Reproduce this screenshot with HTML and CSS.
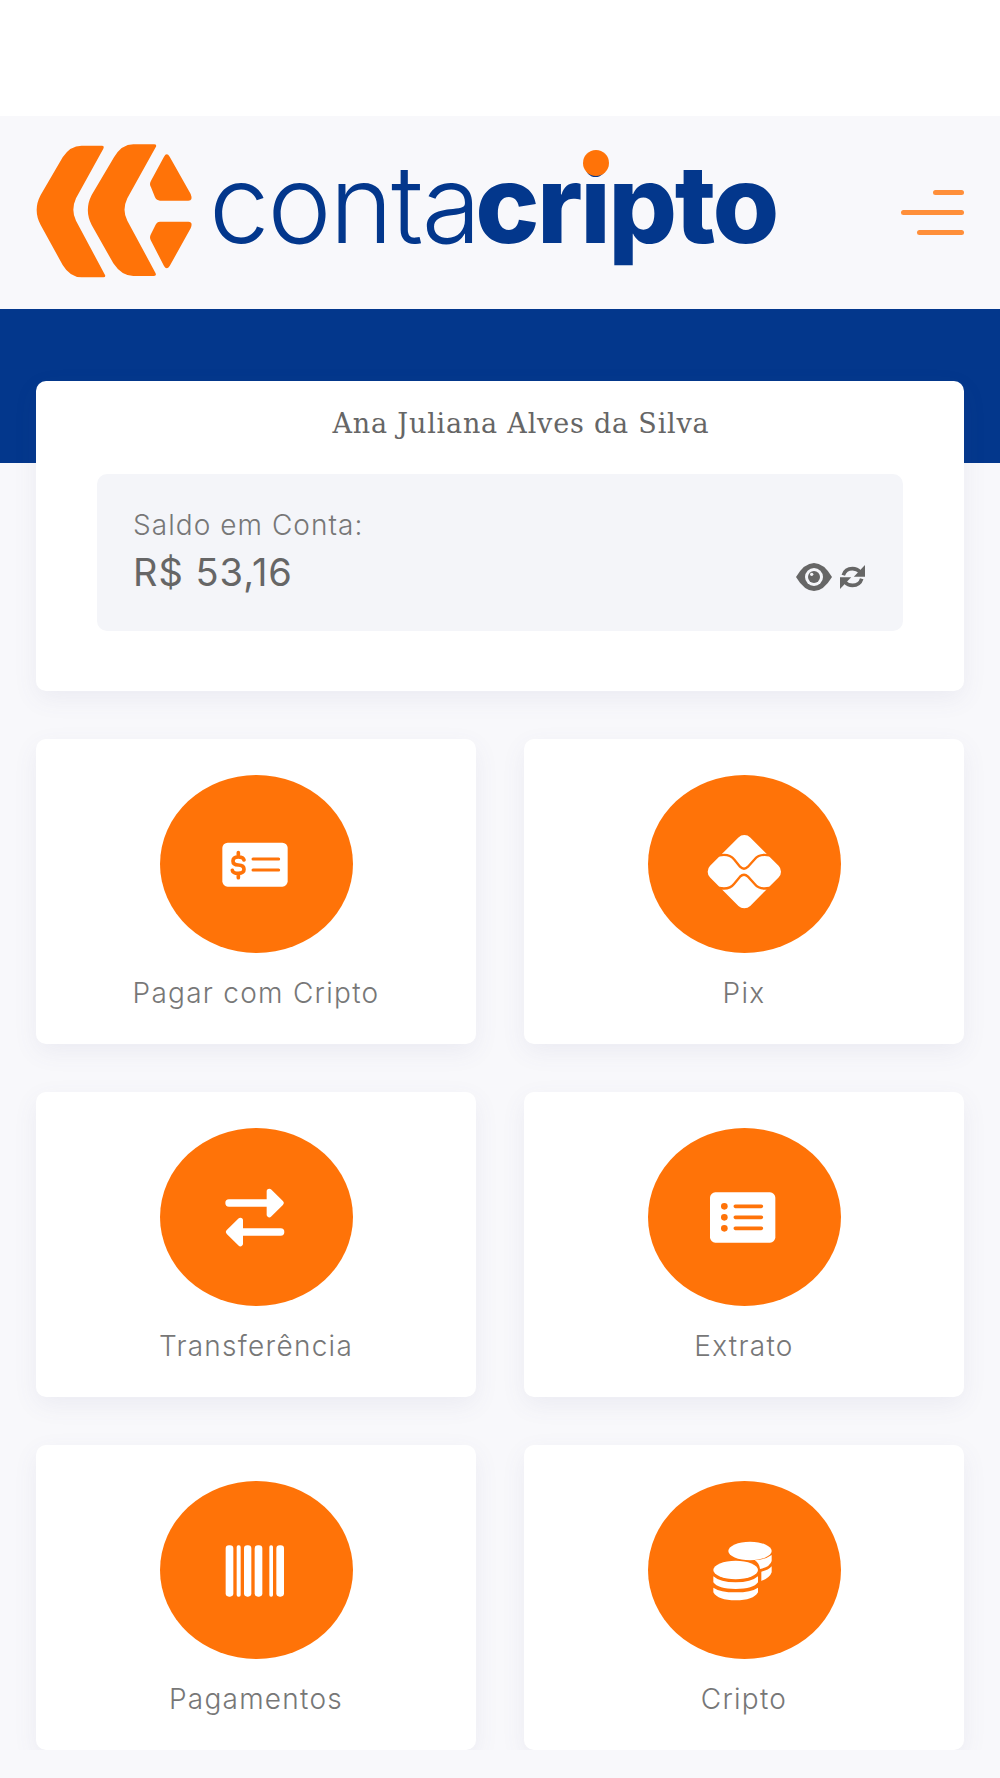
FILE: index.html
```html
<!DOCTYPE html>
<html lang="pt-BR">
<head>
  <meta charset="UTF-8" />
  <meta name="viewport" content="width=device-width, initial-scale=1.0"/>
  <title>Conta Cripto</title>
  <link rel="stylesheet" href="styles.css">
</head>
<body>
  <div class="top-gap"></div>

  <!-- Logo and menu -->
  <div class="navbar">
    <div class="logo">
      <svg class="logo-mark" viewBox="0 0 570 480" aria-hidden="true">
        <path d="M245 47 Q254 47 250 56 L168 205 Q152 240 168 272 L255 435 Q258 442 250 442 L185 442 Q150 442 128 405 L62 285 Q38 240 62 195 L128 82 Q150 47 185 47 Z"/>
        <path d="M402 43 Q412 43 407 52 L322 205 Q305 240 322 272 L406 428 Q411 438 402 438 L340 438 Q305 438 280 400 L215 285 Q192 240 215 195 L282 82 Q305 43 340 43 Z"/>
        <path d="M432 80 Q440 66 449 80 L512 192 Q520 212 505 212 L420 212 Q410 212 405 202 L393 172 Q387 162 393 152 Z"/>
        <path d="M420 275 L505 275 Q520 275 512 295 L449 408 Q440 422 432 408 L393 332 Q387 322 393 312 L405 288 Q410 275 420 275 Z"/>
      </svg>
      <div class="logo-text"><span class="logo-light">conta</span><span class="logo-bold">cr<span class="logo-i">i</span>pto</span></div>
    </div>
    <div class="menu-btn">
      <span class="menu-line line-short"></span>
      <span class="menu-line line-long"></span>
      <span class="menu-line line-mid"></span>
    </div>
  </div>

  <div class="hero"></div>

  <div class="content">
    <!-- Account balance -->
    <div class="account-card">
      <h2 class="account-name">Ana Juliana Alves da Silva</h2>
      <div class="balance-box">
        <div class="balance-text">
          <div class="balance-label">Saldo em Conta:</div>
          <div class="balance-value">R$ 53,16</div>
        </div>
        <div class="balance-tools">
          <svg class="tool-eye" viewBox="50 68 108 84" aria-hidden="true">
            <path class="tool-fill" d="M50 110 Q75 68 104 68 Q133 68 158 110 Q133 152 104 152 Q75 152 50 110 Z"/>
            <circle class="tool-hole" cx="104" cy="110" r="27"/>
            <circle class="tool-fill" cx="104" cy="110" r="18"/>
            <circle class="tool-hole" cx="97" cy="102" r="5"/>
          </svg>
          <svg class="tool-sync" viewBox="182 75 76 73" aria-hidden="true">
            <path class="tool-line" d="M192 106 Q198 86 220 86 Q234 86 243 96"/>
            <path class="tool-fill" d="M258 75 V111 H224 Z"/>
            <path class="tool-line" d="M248 117 Q242 137 220 137 Q206 137 197 127"/>
            <path class="tool-fill" d="M182 148 V112 H216 Z"/>
          </svg>
        </div>
      </div>
    </div>

    <!-- Shortcuts -->
    <div class="action-grid">
      <div class="action-card">
        <div class="action-circle">
          <svg class="action-icon" viewBox="108 72 240 240" aria-hidden="true">
            <rect class="ic-white" x="127" y="128" width="196" height="132" rx="16"/>
            <path class="ic-cut heavy" d="M192 180 Q190 171 175 171 Q159 171 159 183 Q159 195 175 195 Q192 195 192 208 Q192 220 175 220 Q159 220 157 211 M175 158 V171 M175 220 V233"/>
            <path class="ic-cut" d="M219 177 H296 M219 210 H296"/>
          </svg>
        </div>
        <div class="action-label">Pagar com Cripto</div>
      </div>
      <div class="action-card">
        <div class="action-circle">
          <svg class="action-icon" viewBox="102 72 240 240" aria-hidden="true">
            <polygon class="ic-round big" points="223,130 308,215 223,300 138,215"/>
            <path class="ic-cut thin" d="M148 166 Q178 160 192 178 L210 200 Q222 212 234 200 L254 178 Q268 160 298 166"/>
            <path class="ic-cut thin" d="M148 264 Q178 270 192 252 L210 230 Q222 218 234 230 L254 252 Q268 270 298 264"/>
          </svg>
        </div>
        <div class="action-label">Pix</div>
      </div>
      <div class="action-card">
        <div class="action-circle">
          <svg class="action-icon" viewBox="108 81 240 240" aria-hidden="true">
            <path class="ic-bar" d="M147 159 H270 M302 246 H180"/>
            <polygon class="ic-round small" points="268,124 303,159 268,194"/>
            <polygon class="ic-round small" points="181,211 146,246 181,281"/>
          </svg>
        </div>
        <div class="action-label">Transferência</div>
      </div>
      <div class="action-card">
        <div class="action-circle">
          <svg class="action-icon" viewBox="102 81 240 240" aria-hidden="true">
            <rect class="ic-white" x="120" y="127" width="196" height="151" rx="16"/>
            <circle class="ic-dot" cx="163" cy="169" r="10"/>
            <circle class="ic-dot" cx="163" cy="202" r="10"/>
            <circle class="ic-dot" cx="163" cy="235" r="10"/>
            <path class="ic-cut wide" d="M196 169 H274 M196 202 H274 M196 235 H274"/>
          </svg>
        </div>
        <div class="action-label">Extrato</div>
      </div>
      <div class="action-card">
        <div class="action-circle">
          <svg class="action-icon" viewBox="108 87 240 240" aria-hidden="true">
            <rect class="ic-white" x="137" y="133" width="23" height="154" rx="10"/>
            <rect class="ic-white" x="170" y="133" width="12" height="154" rx="5"/>
            <rect class="ic-white" x="192" y="133" width="22" height="154" rx="10"/>
            <rect class="ic-white" x="224" y="133" width="23" height="154" rx="10"/>
            <rect class="ic-white" x="268" y="133" width="11" height="154" rx="5"/>
            <rect class="ic-white" x="289" y="133" width="23" height="154" rx="10"/>
          </svg>
        </div>
        <div class="action-label">Pagamentos</div>
      </div>
      <div class="action-card">
        <div class="action-circle">
          <svg class="action-icon" viewBox="102 87 240 240" aria-hidden="true">
            <ellipse class="ic-white" cx="240" cy="150" rx="65" ry="28"/>
            <path class="ic-white" d="M254 178 Q285 176 305 162 V180 Q300 198 270 204 Q268 186 254 178 Z"/>
            <path class="ic-white" d="M274 212 Q295 208 305 196 V214 Q300 230 274 240 Z"/>
            <ellipse class="ic-white" cx="197" cy="207" rx="67" ry="28"/>
            <path class="ic-white" d="M130 226 Q150 244 197 244 Q244 244 264 226 V244 Q250 264 197 264 Q144 264 130 244 Z"/>
            <path class="ic-white" d="M130 260 Q150 274 197 274 Q244 274 264 260 V274 Q250 298 197 298 Q144 298 130 274 Z"/>
          </svg>
        </div>
        <div class="action-label">Cripto</div>
      </div>
    </div>
  </div>
</body>
</html>
```

FILE: styles.css
```css
* {
  box-sizing: border-box;
}

body {
  margin: 0;
  background-color: #f8f8fb;
  font-family: Inter, "Open Sans", sans-serif;
  color: #666;
}

.top-gap {
  height: 116px;
  background-color: #fff;
}

/* header */
.navbar {
  height: 193px;
  display: flex;
  align-items: center;
  justify-content: space-between;
  padding: 0 36px 0 20px;
}
.logo {
  display: flex;
  align-items: center;
}
.logo-mark {
  width: 190px;
  height: 160px;
  fill: #ff7308;
  margin-top: -6px;
}
.logo-text {
  font-size: 108px;
  line-height: 1;
  color: #03378c;
  display: flex;
  margin-top: -17px;
}
.logo-light {
  font-weight: 300;
  letter-spacing: -2px;
  margin-left: -1px;
}
.logo-bold {
  font-weight: 800;
  letter-spacing: -2.5px;
  margin-left: -4px;
}
.logo-i {
  position: relative;
}
.logo-i::after {
  content: "";
  position: absolute;
  left: 50%;
  top: 12px;
  width: 26px;
  height: 26px;
  margin-left: -11px;
  border-radius: 50%;
  background-color: #ff7308;
}

.menu-btn {
  width: 63px;
  display: flex;
  flex-direction: column;
  align-items: flex-end;
  gap: 15px;
}
.menu-line {
  height: 5px;
  border-radius: 3px;
  background-color: #ff8f3a;
}
.line-short { width: 31px; }
.line-long { width: 63px; }
.line-mid { width: 47px; }

.hero {
  height: 154px;
  background-color: #03378c;
}

.content {
  margin-top: -82px;
  padding: 0 36px;
  position: relative;
}

/* balance */
.account-card {
  height: 310px;
  background: #fff;
  border-radius: 10px;
  padding: 24px 61px 0;
  box-shadow: 0 8px 24px rgba(90, 90, 140, 0.08);
  margin-bottom: 48px;
}
.account-name {
  margin: 0 0 31px;
  padding-left: 42px;
  font-family: "DejaVu Serif", "Liberation Serif", serif;
  font-size: 27px;
  letter-spacing: 0.8px;
  line-height: 38px;
  font-weight: 400;
  text-align: center;
  color: #666;
}
.balance-box {
  height: 157px;
  background-color: #f4f5f9;
  border-radius: 10px;
  padding: 32px 38px 0 36px;
  display: flex;
  justify-content: space-between;
}
.balance-label {
  font-size: 28px;
  font-weight: 300;
  letter-spacing: 1.05px;
  line-height: 38px;
  color: #777;
}
.balance-value {
  font-size: 38px;
  font-weight: 400;
  letter-spacing: 1px;
  line-height: 50px;
  margin-top: 3px;
  color: #666;
}
.balance-tools {
  display: flex;
  align-items: center;
  gap: 8px;
  height: 27px;
  margin-top: 57px;
}
.tool-eye {
  width: 36px;
  height: 28px;
}
.tool-sync {
  width: 25px;
  height: 24px;
}
.tool-fill { fill: #666; }
.tool-hole { fill: #f4f5f9; }
.tool-line {
  fill: none;
  stroke: #666;
  stroke-width: 11;
}

/* shortcuts */
.action-grid {
  display: grid;
  grid-template-columns: repeat(2, 1fr);
  column-gap: 48px;
  row-gap: 48px;
}
.action-card {
  height: 305px;
  background: #fff;
  border-radius: 10px;
  padding-top: 36px;
  box-shadow: 0 8px 24px rgba(90, 90, 140, 0.08);
  display: flex;
  flex-direction: column;
  align-items: center;
}
.action-circle {
  width: 193px;
  height: 178px;
  border-radius: 50%;
  background-color: #ff7308;
  display: flex;
  align-items: center;
  justify-content: center;
}
.action-icon {
  width: 80px;
  height: 80px;
  overflow: visible;
}
.action-label {
  margin-top: 20px;
  font-size: 28px;
  letter-spacing: 1.27px;
  line-height: 40px;
  font-weight: 300;
  color: #777;
}

.ic-white { fill: #fff; }
.ic-dot { fill: #ff7308; }
.ic-cut {
  fill: none;
  stroke: #ff7308;
  stroke-width: 9;
  stroke-linecap: round;
}
.ic-cut.heavy { stroke-width: 11; }
.ic-cut.thin { stroke-width: 7; }
.ic-cut.wide { stroke-width: 11; }
.ic-round {
  fill: #fff;
  stroke: #fff;
  stroke-width: 30;
  stroke-linejoin: round;
}
.ic-round.big { stroke-width: 50; }
.ic-round.small { stroke-width: 16; }
.ic-bar {
  fill: none;
  stroke: #fff;
  stroke-width: 22;
  stroke-linecap: round;
}
```
